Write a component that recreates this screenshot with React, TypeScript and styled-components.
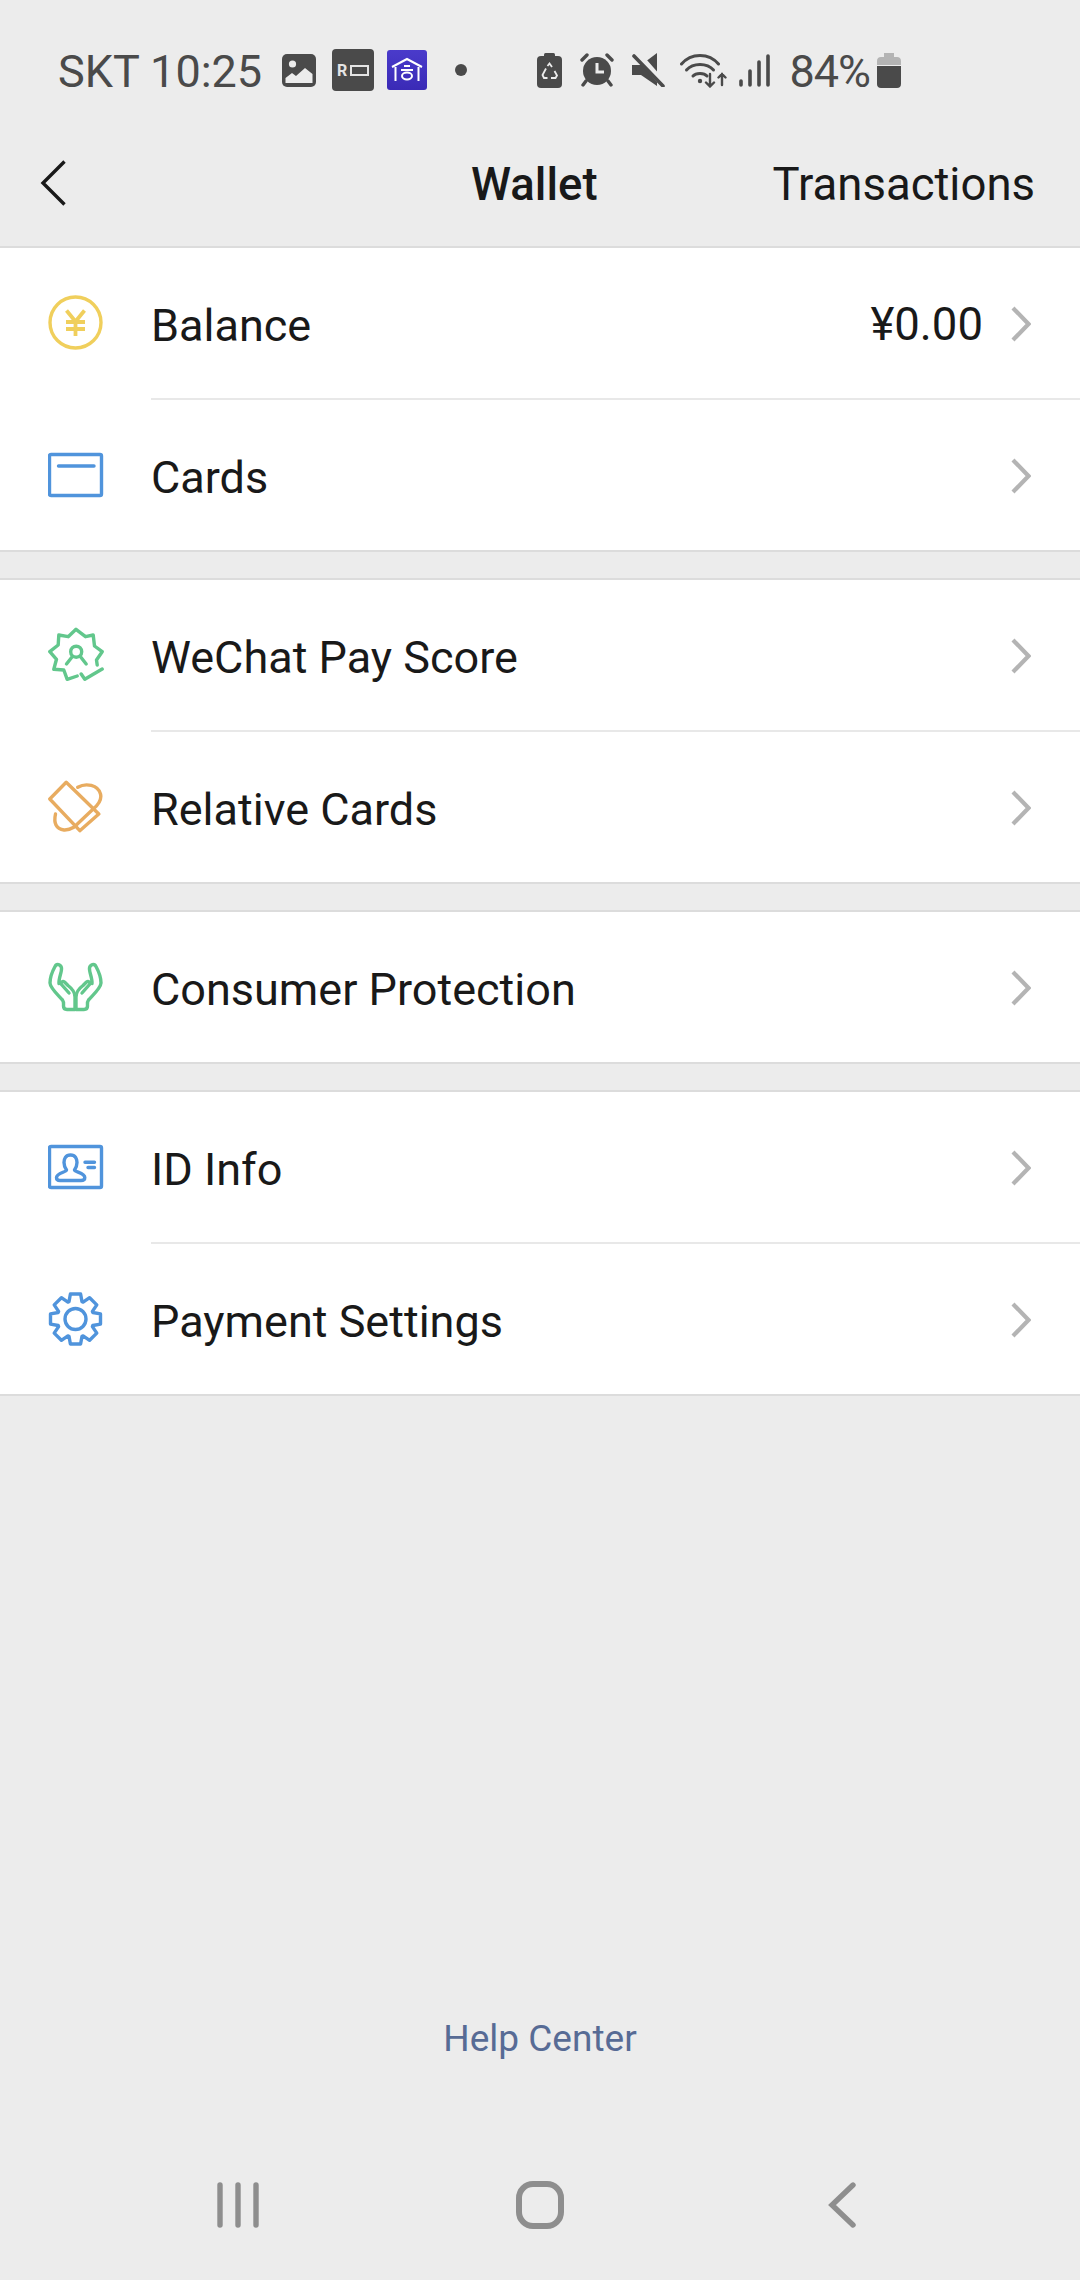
import React from 'react'
import styled, { createGlobalStyle } from 'styled-components'

const Global = createGlobalStyle`
html, body {
  margin: 0;
  padding: 0;
  background: #ececec;
}
* {
  box-sizing: border-box;
}
`

const Page = styled.div`
display: flex;
flex-direction: column;
width: 1080px;
height: 2280px;
background: #ececec;
font-family: Roboto, "Liberation Sans", sans-serif;
color: #191919;
`

const StatusBar = styled.div`
display: flex;
align-items: center;
height: 120px;
padding: 20px 179px 0 58px;
color: #4a4a4a;
`

const StatusText = styled.span`
font-size: 45px;
line-height: 1;
padding-top: 2px;
white-space: nowrap;
`

const BatteryText = styled(StatusText)`
letter-spacing: -1px;
`

const StatusGroup = styled.div`
display: flex;
align-items: center;
`

const StatusRight = styled(StatusGroup)`
margin-left: auto;
`

const Slot = styled.span<{ $left: number }>`
display: flex;
align-items: center;
margin-left: ${(props) => props.$left}px;
`

const RBadge = styled.span`
display: flex;
align-items: center;
justify-content: center;
gap: 3px;
width: 42px;
height: 42px;
border-radius: 4px;
background: #4a4a4a;
color: #e4e4e4;
font-size: 16px;
font-weight: 700;
`

const RBox = styled.i`
display: block;
width: 19px;
height: 11px;
border: 2px solid #e4e4e4;
`

const BlueBadge = styled.span`
display: flex;
width: 40px;
height: 40px;
border-radius: 3px;
background: linear-gradient(#4a3bcb, #3a2ab6);
`

const Dot = styled.i`
display: block;
width: 12px;
height: 12px;
border-radius: 50%;
background: #4a4a4a;
`

const NavBar = styled.div`
display: flex;
align-items: center;
justify-content: space-between;
position: relative;
height: 126px;
padding: 0 45px 0 40px;
`

const NavTitle = styled.div`
position: absolute;
left: 471px;
padding-top: 2px;
font-size: 45.5px;
font-weight: 500;
`

const NavAction = styled.div`
padding-top: 2px;
font-size: 45.5px;
`

const Group = styled.div`
background: #fff;
border-top: 2px solid #dcdcdc;
border-bottom: 2px solid #dcdcdc;
margin-bottom: 26px;
`

const Row = styled.div`
display: flex;
align-items: center;
height: 150px;
padding: 0 49px 0 48px;
`

const RowIcon = styled.div`
display: flex;
width: 56px;
height: 56px;
margin-right: 47px;
`

const RowLabel = styled.div`
flex: 1;
padding-top: 4px;
font-size: 45px;
`

const RowValue = styled.div`
padding-top: 2px;
font-size: 45.5px;
margin-right: 28px;
`

const ChevronSlot = styled.div`
display: flex;
padding-top: 2px;
`

const Divider = styled.div`
height: 2px;
margin-left: 151px;
background: #e8e8e8;
`

const Spacer = styled.div`
flex: 1;
`

const HelpLink = styled.div`
text-align: center;
font-size: 37px;
line-height: 44px;
color: #576b95;
margin-bottom: 120px;
`

const BottomNav = styled.div`
display: grid;
grid-template-columns: repeat(3, 1fr);
align-items: center;
height: 48px;
padding: 0 87px;
margin-bottom: 51px;
color: #8e8e8e;
`

const NavSlot = styled.div`
display: flex;
justify-content: center;
`

const gearPath = () => {
  const pts: string[] = []
  for (let i = 0; i < 8; i++) {
    const a = (i * Math.PI) / 4 - Math.PI / 2
    const offsets: [number, number][] = [
      [-0.36, 18.5],
      [-0.2, 25.5],
      [0.2, 25.5],
      [0.36, 18.5],
    ]
    offsets.forEach(([o, r]) => {
      const x = 27.5 + r * Math.cos(a + o)
      const y = 28 + r * Math.sin(a + o)
      pts.push(`${x.toFixed(1)} ${y.toFixed(1)}`)
    })
  }
  return `M${pts.join(' L')} Z`
}

const Stroke = ({ color, children }: { color: string; children: React.ReactNode }) => (
  <svg width="56" height="56" viewBox="0 0 56 56" fill="none" stroke={color} strokeWidth="3.4" strokeLinecap="round" strokeLinejoin="round">
    {children}
  </svg>
)

const YenIcon = () => (
  <Stroke color="#f0cf5c">
    <circle cx="27.5" cy="27.5" r="25.5" />
    <path d="M18.5 15.5 L27.5 26.5 L36.5 15.5 M18 27 H37 M18 34 H37 M27.5 26.5 V41" strokeLinecap="butt" strokeWidth="3.8" />
  </Stroke>
)

const CardIcon = () => (
  <Stroke color="#5094dc">
    <rect x="1.5" y="7.5" width="52" height="41" rx="1.5" />
    <path d="M10.5 19 H46" />
  </Stroke>
)

const ScoreIcon = () => (
  <Stroke color="#62c78c">
    <path d="M49.2 38 L48.5 33 L54.2 24.7 L46.5 19 L45.2 8 L37.5 9.7 L28 2.3 L20.2 9.7 L10.8 8 L10.2 18 L1.8 24.7 L8.5 32.3 L5.8 42.3 L15.8 43 L19.2 52.3 L29.2 49" />
    <path d="M33.2 47 L36.8 52.3 L54.2 42" />
    <circle cx="28.2" cy="24.7" r="5.5" />
    <path d="M18.5 37 L24.2 29.7 M38.2 37 L32.5 29.7" />
  </Stroke>
)

const RelativeIcon = () => (
  <Stroke color="#e8ac60">
    <path d="M18.2 3.3 L1.8 20 L31.8 51.7 L50.8 35 Z" />
    <path d="M45.2 30 L27.5 46.7" />
    <path d="M29.8 8.3 C38 3.5 50 6 52.5 15 C54 21 50 26 45.2 30" />
    <path d="M7.5 35 C5.5 44 8 50 16 51 C19.5 51.2 23 50 25.8 48.3" />
  </Stroke>
)

const HandPath = 'M11 24.5 C10.5 19 14 13 13.5 9 C13 5.5 8.5 4 7 7.5 C4 13 2 18 2 24 C2.2 29 9 35 14.5 41 C16 43 15.5 45 15.5 47 C15.5 49.5 17 50.5 19 50.5 L27 50.5 L27 38 C27 33 24 29.5 20 26.5 L16.5 23 C14.5 21.5 12.5 23.5 13.5 25.5 L21 34'

const HandsIcon = () => (
  <Stroke color="#62c78c">
    <path d={HandPath} />
    <g transform="matrix(-1 0 0 1 55 0)">
      <path d={HandPath} />
    </g>
  </Stroke>
)

const IdIcon = () => (
  <Stroke color="#5094dc">
    <rect x="1.5" y="7.5" width="52" height="41" rx="1.5" />
    <path d="M22.5 16 C17.5 16 16 20 16 23.5 C16 27 17.5 29.5 18.5 31 C18.5 33 8.5 34 8.5 38.5 C8.5 41 10 41.5 12 41.5 L33 41.5 C35 41.5 36.8 41 36.8 38.5 C36.8 34 26.5 33 26.5 31 C27.5 29.5 29 27 29 23.5 C29 20 27.5 16 22.5 16 Z" />
    <path d="M37 23.3 H46.5 M40 28.5 H46.5" />
  </Stroke>
)

const GearIcon = () => (
  <Stroke color="#5094dc">
    <path d={gearPath()} />
    <circle cx="27.5" cy="28" r="10.5" />
  </Stroke>
)

const Chevron = () => (
  <svg width="20" height="36" viewBox="0 0 20 36" fill="none" stroke="#b4b4b4" strokeWidth="4.2">
    <path d="M2 2 L17.5 18 L2 34" />
  </svg>
)

const ImageGlyph = () => (
  <svg width="34" height="33" viewBox="0 0 34 33">
    <rect width="34" height="33" rx="5" fill="#4a4a4a" />
    <circle cx="10.5" cy="10" r="3.6" fill="#ececec" />
    <path d="M3.5 24 L10 19 L14 22 L23 14 L30.5 20 L30.5 29 L3.5 29 Z" fill="#ececec" />
  </svg>
)

const HouseGlyph = () => (
  <svg width="40" height="40" viewBox="0 0 40 40" fill="none" stroke="#fff" strokeWidth="2">
    <path d="M5 17 L20 9 L35 17 M8.5 17 V31 M31.5 17 V31" />
    <path d="M17 16 H23 M14 20 H26" />
    <ellipse cx="20" cy="26" rx="5" ry="3.4" />
  </svg>
)

const RecycleBattery = () => (
  <svg width="25" height="35" viewBox="0 0 25 35">
    <rect x="7" y="0" width="11" height="5" rx="1.5" fill="#4a4a4a" />
    <rect x="0" y="3" width="25" height="32" rx="4" fill="#4a4a4a" />
    <path d="M10.5 13 L12.5 10.5 L15 14 M9 15.5 L5.5 22 L7 25 H10.5 M14 25 H18.5 L20 22.5 L17.5 18" fill="none" stroke="#ececec" strokeWidth="1.8" />
  </svg>
)

const AlarmGlyph = () => (
  <svg width="34" height="34" viewBox="0 0 34 34">
    <circle cx="17" cy="18" r="14" fill="#4a4a4a" />
    <path d="M2 7 L7 2 M32 7 L27 2 M6 28 L3 32 M28 28 L31 32" stroke="#4a4a4a" strokeWidth="3.4" strokeLinecap="round" />
    <path d="M17 10 V19 H24" fill="none" stroke="#ececec" strokeWidth="3" />
  </svg>
)

const MuteGlyph = () => (
  <svg width="34" height="34" viewBox="0 0 34 34">
    <path d="M0 12 H9 L25 0 V33 L9 22 H0 Z" fill="#4a4a4a" />
    <path d="M5 1 L34 34" stroke="#ececec" strokeWidth="7" />
    <path d="M2 3 L31 33" stroke="#4a4a4a" strokeWidth="3.6" strokeLinecap="round" />
  </svg>
)

const WifiGlyph = () => (
  <svg width="47" height="35" viewBox="0 0 47 35" fill="none" stroke="#4a4a4a" strokeWidth="3" strokeLinecap="round">
    <path d="M1.5 11 C11 -0.5 29 -0.5 38.5 11" />
    <path d="M6.5 17 C13 9.5 27 9.5 33.5 17" />
    <path d="M13 23 C16 19.5 24 19.5 27 23" />
    <circle cx="20" cy="28" r="2.2" fill="#4a4a4a" stroke="none" />
    <path d="M30 21 V33.5 M26 29.5 L30 33.5 L34 29.5 M42 32 V21 M38.5 24.5 L42 21 L45.5 24.5" strokeWidth="2.4" />
  </svg>
)

const SignalGlyph = () => (
  <svg width="31" height="33" viewBox="0 0 31 33" stroke="#4a4a4a" strokeWidth="3.6" strokeLinecap="round">
    <path d="M2 27 V31 M11 17 V31 M20 8 V31 M29 2 V31" />
  </svg>
)

const BatteryGlyph = () => (
  <svg width="24" height="35" viewBox="0 0 24 35">
    <path d="M7 0 H17 V4 H20 C22.5 4 24 5.5 24 8 V12 H0 V8 C0 5.5 1.5 4 4 4 H7 Z" fill="#b4b4b4" />
    <path d="M0 13 H24 V31 C24 33.5 22.5 35 20 35 H4 C1.5 35 0 33.5 0 31 Z" fill="#4a4a4a" />
  </svg>
)

const BackIcon = () => (
  <svg width="26" height="46" viewBox="0 0 26 46" fill="none" stroke="#191919" strokeWidth="3.4">
    <path d="M24.5 1.5 L3 23 L24.5 44.5" />
  </svg>
)

const MenuButton = () => (
  <svg width="46" height="48" viewBox="0 0 46 48" stroke="currentColor" strokeWidth="5.4" strokeLinecap="round">
    <path d="M5 4 V44 M23 4 V44 M41 4 V44" />
  </svg>
)

const HomeButton = () => (
  <svg width="48" height="48" viewBox="0 0 48 48" fill="none" stroke="currentColor" strokeWidth="6">
    <rect x="3" y="3" width="42" height="42" rx="14" />
  </svg>
)

const BackButton = () => (
  <svg width="28" height="48" viewBox="0 0 28 48" fill="none" stroke="currentColor" strokeWidth="5.4" strokeLinecap="round">
    <path d="M25 4 L4 24 L25 44" />
  </svg>
)

const Item = ({ icon, label, value }: { icon: React.ReactNode; label: string; value?: string }) => (
  <Row>
    <RowIcon>{icon}</RowIcon>
    <RowLabel>{label}</RowLabel>
    {value && <RowValue>{value}</RowValue>}
    <ChevronSlot><Chevron /></ChevronSlot>
  </Row>
)

const App = () => {
  return (
    <Page>
      <Global />
      <StatusBar>
        <StatusGroup>
          <StatusText>SKT 10:25</StatusText>
          <Slot $left={20}><ImageGlyph /></Slot>
          <Slot $left={16}><RBadge>R<RBox /></RBadge></Slot>
          <Slot $left={13}><BlueBadge><HouseGlyph /></BlueBadge></Slot>
          <Slot $left={28}><Dot /></Slot>
        </StatusGroup>
        <StatusRight>
          <RecycleBattery />
          <Slot $left={18}><AlarmGlyph /></Slot>
          <Slot $left={18}><MuteGlyph /></Slot>
          <Slot $left={14}><WifiGlyph /></Slot>
          <Slot $left={12}><SignalGlyph /></Slot>
          <Slot $left={19}><BatteryText>84%</BatteryText></Slot>
          <Slot $left={7}><BatteryGlyph /></Slot>
        </StatusRight>
      </StatusBar>

      <NavBar>
        <BackIcon />
        <NavTitle>Wallet</NavTitle>
        <NavAction>Transactions</NavAction>
      </NavBar>

      <Group>
        <Item icon={<YenIcon />} label="Balance" value="¥0.00" />
        <Divider />
        <Item icon={<CardIcon />} label="Cards" />
      </Group>
      <Group>
        <Item icon={<ScoreIcon />} label="WeChat Pay Score" />
        <Divider />
        <Item icon={<RelativeIcon />} label="Relative Cards" />
      </Group>
      <Group>
        <Item icon={<HandsIcon />} label="Consumer Protection" />
      </Group>
      <Group>
        <Item icon={<IdIcon />} label="ID Info" />
        <Divider />
        <Item icon={<GearIcon />} label="Payment Settings" />
      </Group>

      <Spacer />
      <HelpLink>Help Center</HelpLink>
      <BottomNav>
        <NavSlot><MenuButton /></NavSlot>
        <NavSlot><HomeButton /></NavSlot>
        <NavSlot><BackButton /></NavSlot>
      </BottomNav>
    </Page>
  )
}

export default App
